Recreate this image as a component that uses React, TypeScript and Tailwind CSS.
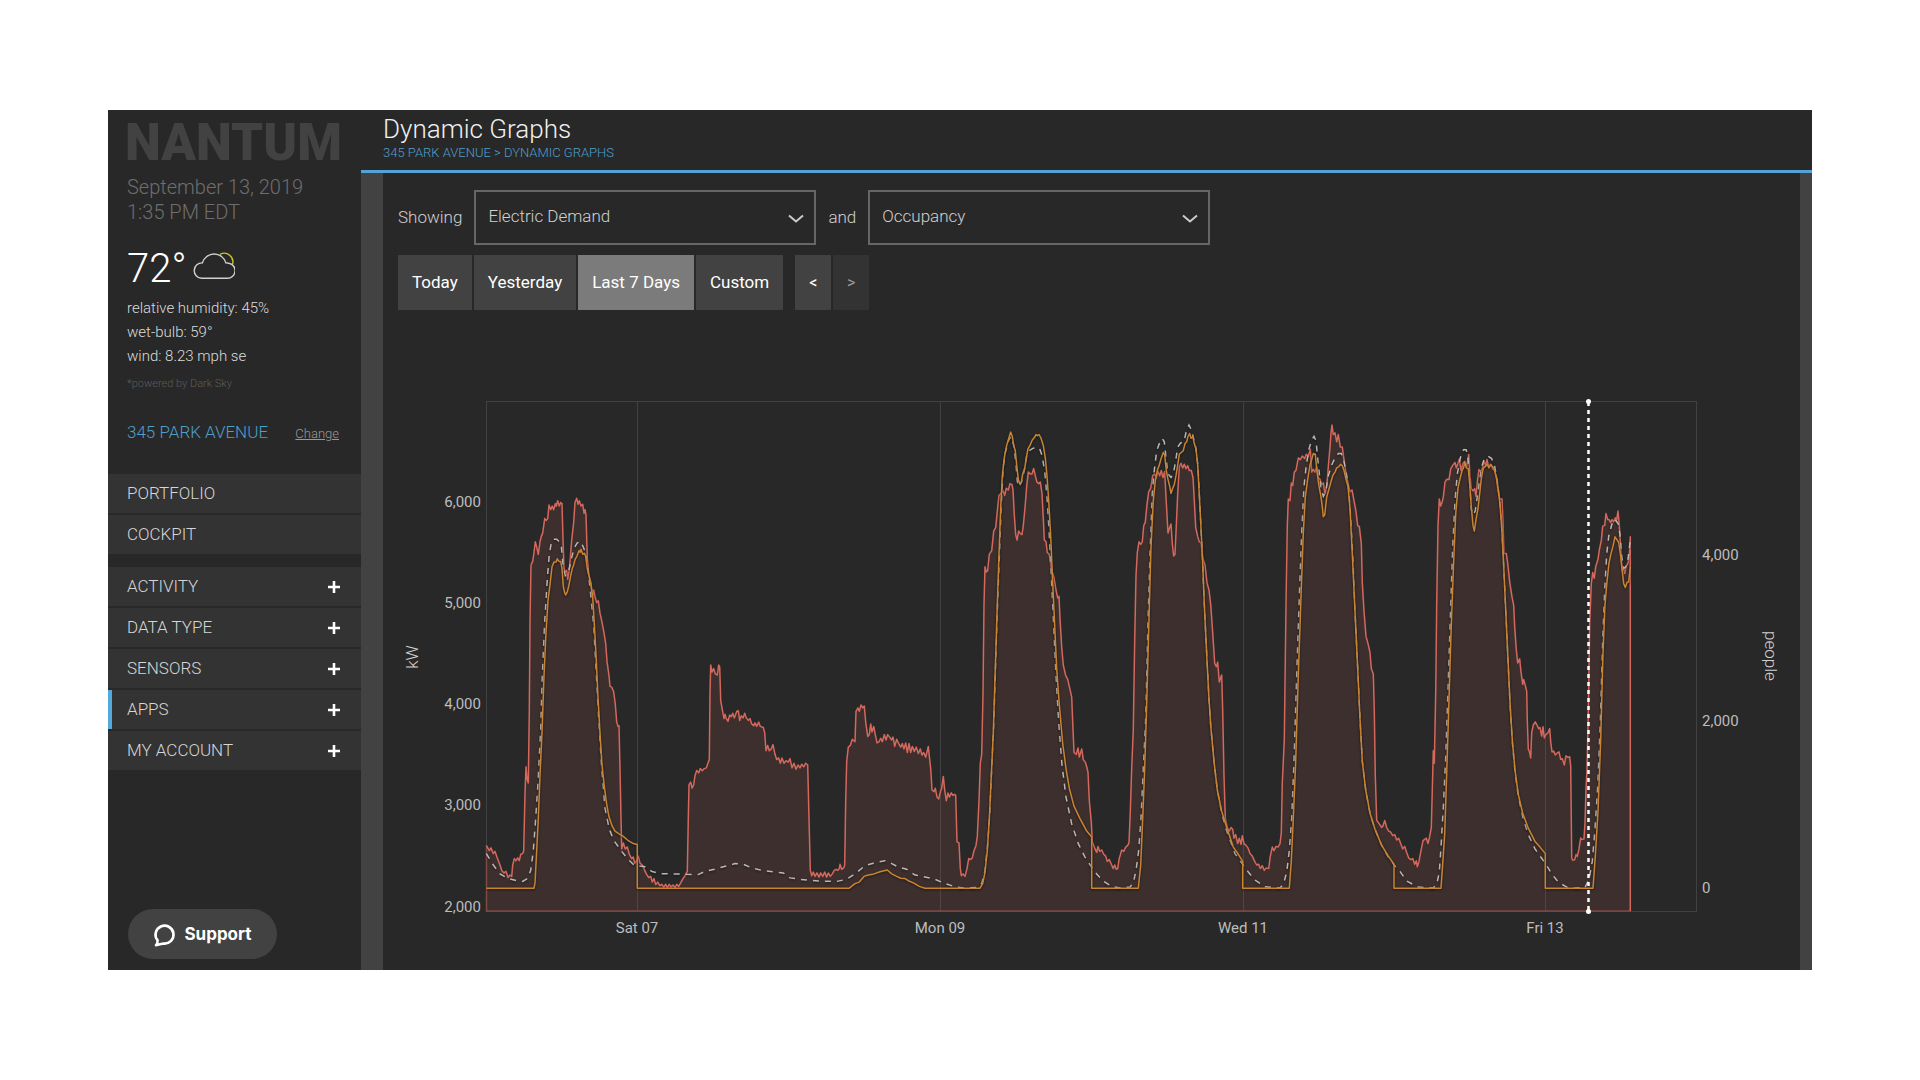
import { useState } from "react";

const mainLinks = ["PORTFOLIO", "COCKPIT"];
const menuGroups = ["ACTIVITY", "DATA TYPE", "SENSORS", "APPS", "MY ACCOUNT"];
const ranges = ["Today", "Yesterday", "Last 7 Days", "Custom"];

// Samples are "time,level" pairs, counted from the start of each block.
type Block = { start: number; samples: string };

const demand: Block[] = [
  {
    start: 0,
    samples:
      "19,1275 28,1290 33,1282 40,1298 45,1292 52,1310 60,1330 65,1345 72,1352 78,1348 84,1365 90,1358 95,1362 98,1330 103,1312 108,1318 113,1310 118,1318 122,1300 128,1298 131,1290 135,1130 138,1055 141,1090 145,1100 148,900 150,650 153,490 158,480 162,455 166,425 170,440 175,460 180,425 184,410 188,400 194,360 199,365 203,360 207,322 212,335 217,325 221,335 226,318 229,325 233,310 238,325 242,315 246,318 249,420 252,500 256,510 260,505 263,530 267,510 271,470 275,420 281,370 285,315 290,303 294,320 298,310 303,325 308,320 312,345 315,335 318,350 322,470 327,520 333,540 337,580 341,560 345,580 350,595 355,590 360,625 366,650 372,680 377,710 381,760 387,800 390,830 395,832 401,845 406,880 410,930 414,942 417,940 420,1060 423,1200 425,1285 430,1268 436,1285 442,1280 448,1300 455,1312 460,1308 464,1325 470,1318 475,1305 480,1325 487,1330 494,1345 499,1355 506,1365 512,1362 517,1378 522,1368 527,1385 533,1378 539,1388 545,1384 551,1392 557,1384 562,1393 568,1384 573,1392 579,1386 585,1393 590,1384 596,1390 602,1380 609,1368 615,1360 622,1348 625,1200 627,1105 632,1098 636,1115 641,1105 645,1080 650,1065 656,1072 661,1060 667,1066 673,1060 679,1058 685,1042 688,1035 690,850 692,770 696,790 701,780 706,795 712,798 716,770 719,775 722,870 727,895 732,920 735,908 739,920 744,928 749,910 754,915 758,905 763,918 770,900 775,898 779,925 784,912 789,918 794,905 799,918 805,925 810,920 815,935 821,940 825,932 830,942 836,930 841,942 850,945 854,960 858,1010 863,995 868,1010 874,1005 879,993 885,1020 890,1035 896,1030 901,1045 906,1030 912,1045 918,1038 925,1042 930,1032 936,1058 942,1045 948,1062 954,1050 960,1058 965,1048 971,1055 977,1045",
  },
  {
    start: 960,
    samples:
      "23,1050 27,1200 31,1345 35,1360 40,1350 45,1362 51,1352 57,1364 62,1352 68,1362 74,1350 80,1364 85,1352 91,1362 97,1355 103,1345 108,1342 113,1345 118,1340 120,1328 125,1342 131,1338 134,1330 137,1150 140,1040 145,1000 151,995 157,978 165,985 168,900 174,890 178,900 183,882 188,890 193,885 197,930 203,970 208,965 212,935 216,958 221,942 226,965 231,988 237,985 242,975 247,985 253,965 258,980 263,965 269,972 275,980 279,972 284,998 290,978 296,990 302,1000 307,990 312,1005 317,988 322,1015 327,990 332,1015 337,998 343,1012 349,1000 355,1018 361,1005 366,1022 371,1015 377,1028 382,1010 385,998 388,1025 392,1060 396,1120 402,1125 406,1115 411,1140 416,1145 421,1125 425,1115 430,1082 434,1120 439,1150 444,1128 448,1140 454,1128 459,1135 464,1132 467,1135 471,1265 477,1268 481,1340 484,1360 489,1355 495,1362 501,1340 506,1312 511,1315 517,1310 522,1290 528,1275 532,1250 537,1150 541,1045 545,1020 549,850 552,600 555,495 559,510 563,505 568,460 575,450 581,395 587,385 592,340 597,295 603,290 608,280 614,295 619,275 625,280 630,262 636,265 639,280 643,350 647,405 651,420 656,395 661,402 666,405 670,380 676,320 680,270 685,230 691,235 696,235 701,220 706,240 711,258 716,262 721,258 726,290 730,360 733,420 738,425 742,455 748,460 754,500 762,525 768,560 773,582 777,578 780,640 785,720 790,770 797,800 803,810 809,835 815,860 818,930 822,1015 829,1020 834,1002 838,1028 845,1005 850,1035 856,1042 860,1055 864,1070 868,1150 874,1210 877,1265 885,1285 890,1295 894,1278 899,1292 905,1288 911,1300 917,1305 922,1320 928,1315 934,1328 940,1340 944,1330 949,1342 953,1340 958,1310",
  },
  {
    start: 1920,
    samples:
      "0,1305 5,1288 11,1292 17,1280 23,1275 27,1268 31,1180 35,1060 40,950 44,700 48,520 52,455 57,425 62,432 67,425 71,380 76,370 81,320 86,285 92,275 98,240 104,235 109,245 114,228 119,240 124,225 129,245 134,228 138,300 144,400 149,385 153,375 157,430 161,465 165,460 169,380 173,290 178,215 183,205 188,218 193,208 198,220 203,212 208,225 214,225 219,245 223,310 227,385 233,410 238,425 243,428 248,470 255,490 261,540 267,560 272,600 278,680 284,765 289,775 293,762 298,818 305,798 308,900 312,1080 316,1200 322,1225 328,1235 333,1225 338,1230 342,1255 347,1245 353,1270 358,1255 363,1272 367,1248 372,1270 378,1275 384,1282 390,1298 397,1305 404,1320 410,1330 416,1328 421,1340 427,1332 433,1345 439,1338 446,1340 451,1305 457,1280 462,1290 468,1278 474,1280 480,1270 484,1240 487,1100 493,980 498,600 502,380 505,305 510,310 514,260 518,268 523,230 528,225 535,190 541,195 547,185 554,192 559,180 565,185 571,165 575,230 580,222 585,230 590,215 595,245 600,250 605,265 610,260 615,290 620,270 625,215 630,160 633,120 636,98 640,125 645,120 650,145 655,125 661,160 667,160 672,195 678,235 684,260 690,285 696,280 702,310 708,340 713,380 718,382 724,430 727,540 732,620 738,690 744,710 750,735 754,780 760,795 763,900 766,1080 770,1205 778,1215 785,1225 789,1220 794,1205 800,1225 806,1235 812,1238 818,1248 824,1245 830,1260 836,1255 842,1270 848,1285 854,1278 860,1295 866,1310 872,1315 878,1312 884,1328 889,1318 892,1335 897,1320 903,1290 909,1262 914,1258 919,1255 924,1270 929,1250 934,1225 937,1120 940,1010 943,1045 947,850 950,600 954,380 958,305",
  },
  {
    start: 2880,
    samples:
      "2,325 7,312 10,300 15,258 20,250 27,251 32,221 38,211 45,203 49,218 54,205 58,193 63,226 69,205 74,200 80,214 86,181 90,242 94,276 99,282 104,276 108,298 113,248 117,223 121,228 126,223 132,200 137,211 141,195 146,216 152,208 158,221 164,226 170,253 176,295 180,305 186,305 189,369 192,458 199,458 203,485 209,537 216,579 221,603 224,664 229,727 233,764 239,753 243,790 248,824 251,811 256,827 260,843 262,927 265,1006 268,1011 272,1030 275,959 280,938 286,929 291,938 296,948 300,945 305,969 309,943 313,974 318,964 323,961 329,948 332,985 336,1013 341,1011 346,1022 351,1017 357,1013 362,1034 367,1032 373,1050 378,1024 384,1029 389,1027 392,1053 395,1311 399,1317 404,1315 408,1301 412,1306 417,1285 422,1254 426,1259 432,1257 435,1211 438,1117 441,1064 445,906 449,653 454,542 458,511 463,527 467,495 474,474 478,448 484,421 488,381 494,379 498,346 503,363 507,363 512,371 516,363 521,369 526,358 530,363 534,339 538,379 542,442 546,506 550,495 554,514 559,493 564,485 568,463 571,411",
  },
];

const occupancy: Block[] = [
  {
    start: 0,
    samples:
      "19,1395 162,1395 165,1380 170,1290 175,1200 180,1080 186,960 192,800 198,680 204,590 210,545 216,495 222,482 228,482 232,473 237,480 242,480 246,500 250,550 254,568 257,574 262,565 266,550 272,520 277,500 281,490 285,475 291,465 297,450 300,455 303,446 308,460 313,457 317,465 322,500 327,520 333,545 338,580 342,640 348,740 354,860 360,960 366,1050 373,1110 380,1160 387,1195 396,1220 405,1235 416,1242 430,1250 445,1262 460,1270 472,1273 472,1395",
  },
  {
    start: 960,
    samples:
      "148,1395 165,1382 178,1378 192,1362 205,1358 222,1355 240,1349 262,1344 275,1355 290,1362 302,1367 315,1368 325,1374 340,1380 358,1390 375,1395 540,1395 548,1382 555,1350 562,1290 568,1200 574,1080 580,960 586,780 592,600 597,460 602,330 607,240 613,190 620,155 628,130 632,118 637,130 641,155 646,170 650,210 655,250 659,262 664,260 668,235 674,220 679,190 684,165 690,155 697,140 704,132 708,125 712,128 717,125 723,135 730,155 736,190 741,240 746,310 752,410 758,540 764,660 770,780 778,880 788,990 798,1060 808,1115 822,1165 840,1200 860,1235 875,1252 875,1395",
  },
  {
    start: 1920,
    samples:
      "55,1395 62,1330 68,1200 74,1060 80,880 87,640 93,440 100,310 106,255 112,225 118,210 124,190 130,175 134,182 139,225 144,250 149,270 153,290 158,275 163,265 168,240 173,210 178,180 184,175 190,170 195,150 200,145 204,130 209,122 213,135 218,130 223,150 228,165 233,210 240,330 247,460 253,600 260,740 266,850 272,940 282,1040 292,1120 305,1180 320,1225 340,1280 355,1300 368,1320 368,1395 508,1395 514,1320 520,1200 527,1040 535,800 543,580 550,400 556,300 563,250 570,210 575,195 580,178 586,180 590,220 596,265 602,295 606,320 610,355 614,350 620,300 626,280 632,260 638,240 645,230 650,218 656,215 662,208 667,212 672,225 678,250 684,270 690,330 697,460 705,620 713,780 720,920 727,1040 737,1120 750,1185 765,1230 785,1275 805,1305 822,1328 822,1395",
  },
  {
    start: 2880,
    samples:
      "3,1395 8,1327 14,1243 20,1074 26,895 33,685 40,506 47,348 54,274 60,248 66,226 71,216 74,203 79,218 85,221 89,263 94,327 99,379 103,395 108,363 114,332 119,290 124,248 130,219 136,214 142,208 147,218 152,209 157,214 163,223 169,242 175,279 180,321 185,384 190,469 196,590 203,737 210,874 217,980 225,1064 235,1132 248,1185 265,1227 285,1264 300,1280 316,1298 316,1395 459,1395 466,1306 474,1180 482,980 489,737 495,600 501,537 507,485 513,458 519,437 525,411 530,418 536,427 541,458 546,500 551,542 556,553 561,539 566,537 571,495",
  },
];

const forecast: Block[] = [
  {
    start: 0,
    samples:
      "19,1298 40,1330 60,1355 85,1368 110,1374 128,1376 142,1368 152,1345 160,1290 167,1200 174,1100 182,950 187,800 194,650 202,530 208,460 214,428 220,418 230,418 238,425 244,435 249,490 256,520 262,515 268,500 276,465 284,440 292,428 302,424 310,440 318,460 326,520 334,590 341,660 348,780 356,920 365,1060 375,1170 388,1230 402,1262 425,1292 445,1315 462,1330 480,1333 495,1335 515,1348 540,1354 570,1355 600,1355 620,1356 655,1357 675,1348 700,1343 730,1335 765,1326 790,1328 815,1338 850,1346 910,1352 930,1366",
  },
  {
    start: 960,
    samples:
      "0,1370 60,1375 110,1376 140,1370 165,1355 195,1332 220,1325 255,1318 275,1326 295,1336 320,1342 345,1358 400,1368 430,1380 465,1391 490,1394 530,1393 545,1382 555,1345 563,1270 569,1190 575,1060 581,940 587,760 593,590 599,440 604,320 610,215 616,175 626,140 634,130 641,155 647,200 652,255 657,272 665,255 673,225 680,185 690,168 700,163 711,160 719,165 727,185 735,235 741,300 747,390 754,520 761,660 768,800 776,930 786,1050 798,1140 815,1215 835,1270 855,1308 872,1332 890,1355 910,1375 935,1390 960,1394",
  },
  {
    start: 1920,
    samples:
      "30,1392 40,1380 48,1345 56,1290 63,1200 70,1060 77,920 84,650 90,460 97,290 103,225 110,170 120,145 127,136 133,145 138,190 144,235 153,245 160,235 166,205 173,160 182,148 192,145 199,115 207,98 214,112 222,140 228,165 234,215 240,330 247,460 253,600 260,740 266,850 272,940 282,1040 292,1120 305,1185 320,1235 345,1298 368,1328 385,1350 405,1372 435,1391 480,1394 490,1385 500,1350 508,1290 515,1200 522,1040 530,800 538,580 545,400 552,270 559,210 567,165 575,140 582,130 588,142 594,200 602,270 610,298 617,285 625,240 635,210 645,190 655,178 664,178 672,200 680,240 686,280 691,340 698,460 705,620 713,780 720,920 727,1040 737,1120 750,1185 765,1230 785,1275 805,1308 822,1330 840,1348 860,1375 895,1392 940,1394 950,1385 958,1350",
  },
  {
    start: 2880,
    samples:
      "3,1280 10,1170 17,1030 24,840 31,640 38,440 45,310 52,235 60,195 66,172 72,167 79,168 84,190 89,260 94,335 100,350 106,338 112,300 118,258 125,215 133,192 145,186 155,192 164,215 172,255 180,320 185,384 190,469 196,590 203,737 210,880 217,985 225,1070 235,1138 248,1195 265,1245 285,1285 300,1305 316,1325 335,1355 355,1378 380,1392 400,1395 435,1393 447,1370 457,1320 465,1230 473,1110 481,930 488,700 494,560 500,460 506,410 513,385 520,362 528,366 535,375 540,405 545,465 551,500 557,495 563,480 571,420",
  },
];

function toPath(blocks: Block[]) {
  const points = blocks.flatMap(({ start, samples }) =>
    samples.split(" ").map((pair) => {
      const [t, level] = pair.split(",").map(Number);
      return `${((start + t) / 3 + 97).toFixed(1)} ${(level / 2.8).toFixed(1)}`;
    })
  );
  return "M" + points.join("L");
}

const days = [
  { label: "Sat 07", x: 254 },
  { label: "Mon 09", x: 557 },
  { label: "Wed 11", x: 860 },
  { label: "Fri 13", x: 1162 },
];

const kwTicks = [
  { label: "6,000", y: 112 },
  { label: "5,000", y: 213 },
  { label: "4,000", y: 314 },
  { label: "3,000", y: 415 },
  { label: "2,000", y: 517 },
];

const peopleTicks = [
  { label: "4,000", y: 165 },
  { label: "2,000", y: 331 },
  { label: "0", y: 498 },
];

function Logo() {
  return (
    <svg className="block w-full h-[65px]" viewBox="0 0 253 65" role="img" aria-label="Nantum">
      <text x="17" y="50" fontSize="51" className="font-black fill-[#424242]">
        NANTUM
      </text>
    </svg>
  );
}

function WeatherIcon() {
  return (
    <svg className="w-[42px] h-[27px] mb-2" viewBox="0 0 42 27" fill="none" strokeWidth="1.4">
      <path d="M27 2.4A8.6 8.6 0 0 1 39.4 12.6" stroke="#c9c32f" />
      <path
        d="M8.5 26.3h26a7.6 7.6 0 0 0 1.2-15.1q-1.6-.4-2.8-.3A12.2 12.2 0 0 0 9.4 10.9 7.7 7.7 0 0 0 8.5 26.3z"
        stroke="#d0d0d0"
      />
    </svg>
  );
}

function PlusIcon() {
  return (
    <svg className="w-3 h-3" viewBox="0 0 12 12" stroke="#fff" strokeWidth="2.6">
      <path d="M6 0v12M0 6h12" />
    </svg>
  );
}

function Sidebar() {
  return (
    <aside className="w-[253px] shrink-0 flex flex-col">
      <Logo />
      <div className="px-[19px]">
        <div className="text-xl leading-[25px] font-light text-[#6e6e6e]">
          <p>September 13, 2019</p>
          <p>1:35 PM EDT</p>
        </div>

        <div className="mt-6 flex items-center gap-[6px]">
          <span className="text-[40px] leading-10 font-light text-white">72°</span>
          <WeatherIcon />
        </div>
        <div className="mt-[7px] text-[15px] leading-6 font-light text-[#dcdcdc]">
          <p>relative humidity: 45%</p>
          <p>wet-bulb: 59°</p>
          <p>wind: 8.23 mph se</p>
        </div>
        <p className="mt-[6px] text-[11px] leading-5 font-light text-[#5c5c5c]">*powered by Dark Sky</p>

        <div className="mt-6 mb-7 flex items-baseline justify-between pr-[3px]">
          <span className="text-[17px] leading-7 font-light text-[#4f9fcb]">345 PARK AVENUE</span>
          <a href="#" className="text-[13px] font-light text-[#999] underline">
            Change
          </a>
        </div>
      </div>

      <nav className="flex flex-col gap-[13px]">
        <div className="flex flex-col gap-[2px]">
          {mainLinks.map((item) => (
            <a
              key={item}
              href="#"
              className="h-[39px] flex items-center px-[19px] bg-[#333] text-[17px] font-light text-[#d6d6d6]"
            >
              {item}
            </a>
          ))}
        </div>
        <div className="flex flex-col gap-[2px]">
          {menuGroups.map((item) => (
            <button
              key={item}
              className={
                item === "APPS"
                  ? "h-[39px] flex items-center justify-between border-l-4 border-[#53a9dc] pl-[15px] pr-[21px] bg-[#333] text-[17px] font-light text-[#d6d6d6]"
                  : "h-[39px] flex items-center justify-between pl-[19px] pr-[21px] bg-[#333] text-[17px] font-light text-[#d6d6d6]"
              }
            >
              {item}
              <PlusIcon />
            </button>
          ))}
        </div>
      </nav>

      <button className="mt-auto mb-[11px] ml-5 w-[149px] h-[50px] pt-[2px] rounded-full bg-[#424242] flex items-center justify-center gap-[7px] font-['Inter',sans-serif] font-bold text-[17px] text-white">
        <svg className="w-6 h-6" viewBox="0 0 24 24" fill="none" stroke="#fff" strokeWidth="2.6">
          <path
            d="M4.6 17.4A9 9 0 1 1 10.5 20.6Q7 21.4 3 22.2 4.8 20.4 4.6 17.4"
            strokeLinecap="round"
            strokeLinejoin="round"
          />
        </svg>
        Support
      </button>
    </aside>
  );
}

function MetricSelect({ label, id, value }: { label: string; id: string; value: string }) {
  const [metric, setMetric] = useState(value);

  return (
    <>
      <label htmlFor={id} className="text-[17px] font-light text-[#d0d0d0]">
        {label}
      </label>
      <div className="relative w-[342px]">
        <select
          id={id}
          value={metric}
          onChange={(e) => setMetric(e.target.value)}
          className="w-full h-[55px] appearance-none border-2 border-[#666] bg-[#282828] pl-3 pr-10 pb-[2px] text-[17px] font-light text-[#d0d0d0]"
        >
          <option>Electric Demand</option>
          <option>Occupancy</option>
        </select>
        <svg
          className="absolute right-3 top-6 w-4 h-[9px] pointer-events-none"
          viewBox="0 0 16 9"
          fill="none"
          stroke="#ccc"
          strokeWidth="2"
        >
          <path d="M1 1.5l7 6 7-6" />
        </svg>
      </div>
    </>
  );
}

function DemandChart() {
  const demandPath = toPath(demand);

  return (
    <svg className="block w-full h-auto" viewBox="0 0 1417 570" fill="none">
      <rect x="103.5" y="11.5" width="1210" height="510" stroke="#414141" />
      {days.map((day) => (
        <g key={day.label}>
          <path d={`M${day.x + 0.5} 12v509`} stroke="#414141" />
          <text x={day.x} y="543" textAnchor="middle" fontSize="15" className="fill-[#bdbdbd]">
            {day.label}
          </text>
        </g>
      ))}
      {kwTicks.map((tick) => (
        <text key={tick.label} x="98" y={tick.y + 5} textAnchor="end" fontSize="15" className="fill-[#bdbdbd]">
          {tick.label}
        </text>
      ))}
      {peopleTicks.map((tick) => (
        <text key={tick.label} x="1319" y={tick.y + 5} fontSize="15" className="fill-[#bdbdbd]">
          {tick.label}
        </text>
      ))}
      <text transform="translate(35 267) rotate(-90)" textAnchor="middle" fontSize="17" className="font-light fill-[#d0d0d0]">
        kW
      </text>
      <text transform="translate(1382 266) rotate(90)" textAnchor="middle" fontSize="17" className="font-light fill-[#d0d0d0]">
        people
      </text>

      <path d={`${demandPath}V521H103.5Z`} fill="#e06c5f" fillOpacity="0.11" />
      <path d="M103.5 456V521H1248" stroke="#7f4a44" strokeWidth="1.5" />
      <path d={`${demandPath}V521`} stroke="#d4685d" strokeWidth="1.5" strokeLinejoin="round" />
      <path
        d={toPath(forecast)}
        stroke="#bcb6b4"
        strokeWidth="1.5"
        strokeDasharray="6 6"
        className="drop-shadow-[0_1px_1px_rgba(0,0,0,0.5)]"
      />
      <path
        d={toPath(occupancy)}
        stroke="#c98432"
        strokeWidth="1.5"
        strokeLinejoin="round"
        className="drop-shadow-[0_1px_1px_rgba(0,0,0,0.5)]"
      />

      <path d="M1205.5 12V521" stroke="#fff" strokeWidth="2.5" strokeDasharray="4 4" />
      <circle cx="1205.5" cy="11.5" r="2.5" fill="#fff" />
      <circle cx="1205.5" cy="521.5" r="2.5" fill="#fff" />
    </svg>
  );
}

export default function App() {
  const [range, setRange] = useState("Last 7 Days");

  return (
    <div className="min-h-screen flex bg-white px-[108px] py-[110px] font-['Roboto',sans-serif]">
      <div className="flex-1 min-w-0 flex bg-[#282828]">
        <Sidebar />

        <main className="flex-1 min-w-0 flex flex-col">
          <header className="h-[63px] box-border border-b-[3px] border-[#53a2d8] pl-[22px] pt-[3px]">
            <h1 className="text-[26px] leading-8 font-light text-[#f0f0f0]">Dynamic Graphs</h1>
            <p className="text-[13px] leading-4 font-light text-[#4f9fcb]">
              <a href="#">345 PARK AVENUE</a> &gt; <a href="#">DYNAMIC GRAPHS</a>
            </p>
          </header>

          <section className="flex-1 border-l-[22px] border-r-[12px] border-[#424242]">
            <div className="px-[15px] pt-[17px]">
              <div className="flex items-center gap-3">
                <MetricSelect id="first-metric" label="Showing" value="Electric Demand" />
                <MetricSelect id="second-metric" label="and" value="Occupancy" />
              </div>

              <div className="mt-[10px] flex gap-[2px] text-[17px] text-white">
                {ranges.map((item) => (
                  <button
                    key={item}
                    onClick={() => setRange(item)}
                    className={
                      item === range ? "h-[55px] px-[14px] bg-[#7b7b7b]" : "h-[55px] px-[14px] bg-[#424242]"
                    }
                  >
                    {item}
                  </button>
                ))}
                <button className="ml-[10px] w-9 h-[55px] bg-[#424242] text-base" aria-label="Previous period">
                  &lt;
                </button>
                <button className="w-9 h-[55px] bg-[#333] text-base text-[#999]" aria-label="Next period" disabled>
                  &gt;
                </button>
              </div>
            </div>

            <div className="mt-20">
              <DemandChart />
            </div>
          </section>
        </main>
      </div>
    </div>
  );
}
